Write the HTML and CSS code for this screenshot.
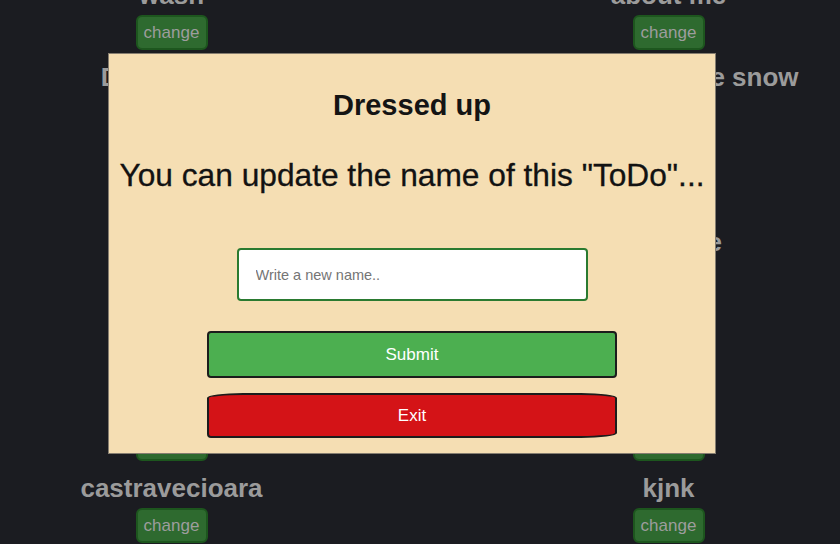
FILE: index.html
```html
<!DOCTYPE html>
<html lang="en">
<head>
<meta charset="utf-8">
<title>ToDo</title>
<link rel="stylesheet" href="styles.css">
</head>
<body>
  <main class="todo-list">
    <div class="todo"><h3 class="todo-title">wash</h3><button class="change-btn">change</button></div>
    <div class="todo"><h3 class="todo-title">about me</h3><button class="change-btn">change</button></div>
    <div class="todo"><h3 class="todo-title">Dressed up</h3><button class="change-btn">change</button></div>
    <div class="todo"><h3 class="todo-title">Have fun in the snow</h3><button class="change-btn">change</button></div>
    <div class="todo"><h3 class="todo-title">Read</h3><button class="change-btn">change</button></div>
    <div class="todo"><h3 class="todo-title">Cook</h3><button class="change-btn">change</button></div>
    <div class="todo"><h3 class="todo-title">Clean</h3><button class="change-btn">change</button></div>
    <div class="todo"><h3 class="todo-title">Exercise</h3><button class="change-btn">change</button></div>
    <div class="todo"><h3 class="todo-title">Shop</h3><button class="change-btn">change</button></div>
    <div class="todo"><h3 class="todo-title">Study</h3><button class="change-btn">change</button></div>
    <div class="todo"><h3 class="todo-title">Walk</h3><button class="change-btn">change</button></div>
    <div class="todo"><h3 class="todo-title">Sleep</h3><button class="change-btn">change</button></div>
    <div class="todo"><h3 class="todo-title">castravecioara</h3><button class="change-btn">change</button></div>
    <div class="todo"><h3 class="todo-title">kjnk</h3><button class="change-btn">change</button></div>
  </main>

  <div class="modal">
    <h2 class="modal-title">Dressed up</h2>
    <p class="modal-text">You can update the name of this "ToDo"...</p>
    <input class="modal-input" type="text" placeholder="Write a new name..">
    <button class="btn btn-submit">Submit</button>
    <button class="btn btn-exit">Exit</button>
  </div>
</body>
</html>
```

FILE: styles.css
```css
* { box-sizing: border-box; }

html, body {
  margin: 0;
  padding: 0;
  height: 100%;
  overflow: hidden;
}

body {
  background: #1b1c21;
  font-family: "Liberation Sans", Arial, sans-serif;
}

.todo-list {
  display: grid;
  grid-template-columns: 343px 343px;
  column-gap: 154px;
  margin-top: -20px;
}

.todo {
  display: flex;
  flex-direction: column;
  align-items: center;
  height: 82.2px;
}

.todo-title {
  margin: 0 0 5px;
  font-size: 26px;
  line-height: 30px;
  font-weight: bold;
  color: #9b9b9b;
  white-space: nowrap;
}

.change-btn {
  height: 35px;
  width: 72px;
  padding: 0;
  font-family: "Liberation Sans", Arial, sans-serif;
  font-size: 17px;
  color: #9d9d9d;
  background: #2e6a2f;
  border: 2px solid #1d561e;
  border-radius: 6px;
}

.modal {
  position: fixed;
  left: 108px;
  top: 53px;
  width: 608px;
  height: 401px;
  background: #f5deb3;
  border: 1px solid #857d70;
  display: flex;
  flex-direction: column;
  align-items: center;
  padding-top: 34px;
}

.modal-title {
  margin: 0;
  font-size: 29px;
  line-height: 34px;
  font-weight: bold;
  color: #141414;
}

.modal-text {
  margin: 35px 0 0;
  font-size: 31.7px;
  line-height: 36px;
  color: #121212;
  -webkit-text-stroke: 0.3px #121212;
  white-space: nowrap;
}

.modal-input {
  margin-top: 55px;
  width: 351px;
  height: 53px;
  padding: 0 0 0 17px;
  border: 2px solid #2a7a30;
  border-radius: 4px;
  background: #fff;
  font-family: "Liberation Sans", Arial, sans-serif;
  font-size: 14.5px;
  outline: none;
}

.modal-input::placeholder {
  color: #757575;
}

.btn {
  width: 410px;
  padding: 0;
  font-family: "Liberation Sans", Arial, sans-serif;
  font-size: 17px;
  color: #fff;
  border: 2px solid #1c1c1c;
}

.btn-submit {
  margin-top: 30px;
  height: 47px;
  background: #4caf50;
  border-radius: 4px;
}

.btn-exit {
  margin-top: 15px;
  height: 45px;
  background: #d41317;
  border-radius: 36px 36px 36px 4px / 5px 5px 5px 4px;
}
```
